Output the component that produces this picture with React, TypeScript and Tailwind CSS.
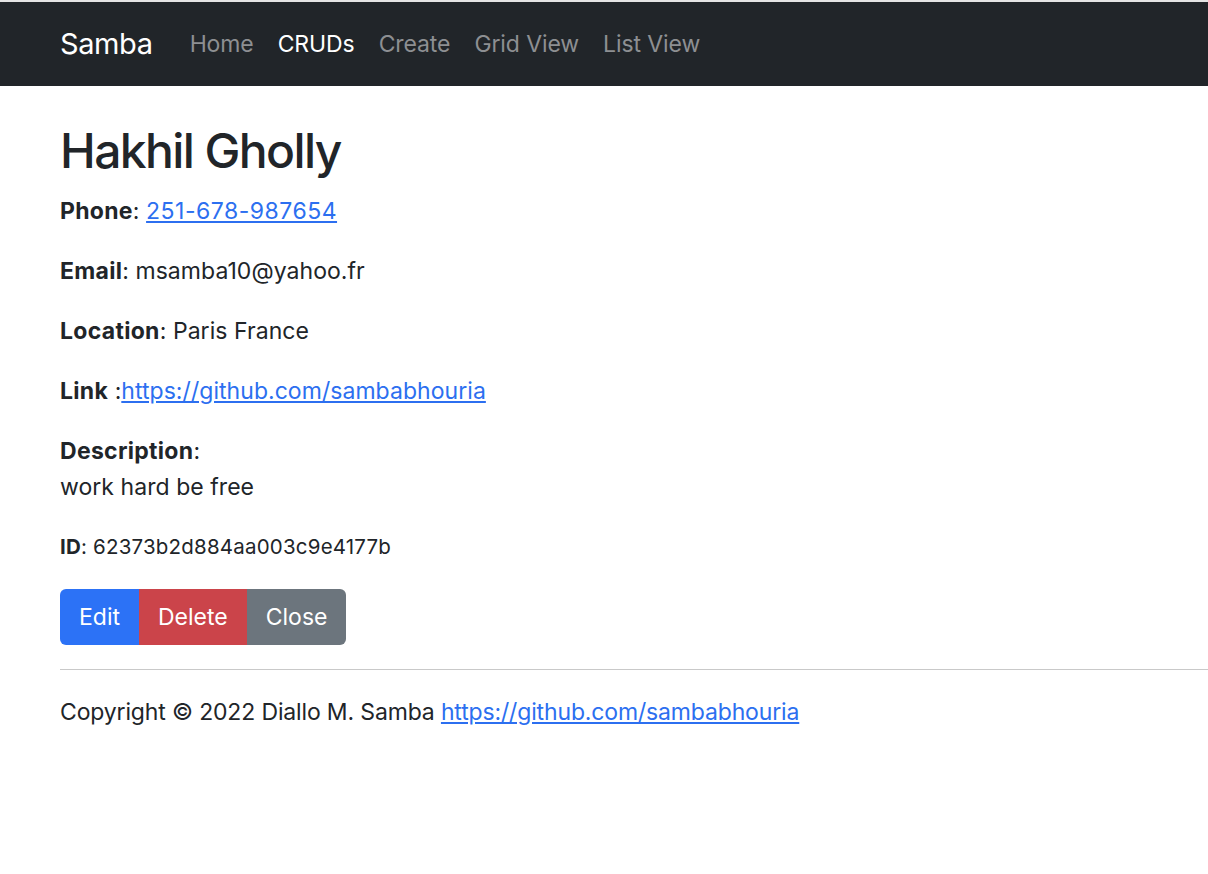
import React from 'react';

const navLinks = [
  { label: 'Home', active: false },
  { label: 'CRUDs', active: true },
  { label: 'Create', active: false },
  { label: 'Grid View', active: false },
  { label: 'List View', active: false },
];

export default function App() {
  return (
    <div className="min-h-screen bg-white font-['Inter',sans-serif] text-[23px] leading-[36px] text-[#212529]">
      <div className="h-[2px] bg-[#e4e4e4]" />
      <nav className="bg-[#212529] h-[84px] flex items-center px-[60px]">
        <a href="#" className="text-[29px] text-white mr-[25px] tracking-[-0.4px]">
          Samba
        </a>
        <div className="flex">
          {navLinks.map((l) => (
            <a
              key={l.label}
              href="#"
              className={`px-[12px] tracking-[-0.1px] ${l.active ? 'text-white' : 'text-[#8d8f92]'}`}
            >
              {l.label}
            </a>
          ))}
        </div>
      </nav>

      <main className="pl-[60px] pt-[35px]">
        <h1 className="text-[48px] leading-[60px] font-medium mb-[12px] tracking-[-1.6px]">Hakhil Gholly</h1>

        <div className="tracking-[0.05px]">
          <p className="mb-[24px]">
            <strong className="font-bold tracking-[0.3px]">Phone</strong>:{' '}
            <a href="#" className="text-[#2c6ff0] underline tracking-[0.5px]">
              251-678-987654
            </a>
          </p>
          <p className="mb-[24px]">
            <strong className="font-bold tracking-[0.3px]">Email</strong>: msamba10@yahoo.fr
          </p>
          <p className="mb-[24px]">
            <strong className="font-bold tracking-[0.3px]">Location</strong>: Paris France
          </p>
          <p className="mb-[24px]">
            <strong className="font-bold tracking-[0.3px]">Link</strong> :
            <a href="#" className="text-[#2c6ff0] underline">
              https://github.com/sambabhouria
            </a>
          </p>
          <p className="mb-[24px]">
            <strong className="font-bold tracking-[0.3px]">Description</strong>:
            <br />
            work hard be free
          </p>
          <p className="mb-[24px] text-[20.5px] tracking-[0.2px]">
            <strong className="font-bold">ID</strong>: 62373b2d884aa003c9e4177b
          </p>
        </div>

        <div className="flex">
          <button className="h-[56px] px-[19px] bg-[#2c72f6] text-white rounded-l-[6px]">Edit</button>
          <button className="h-[56px] px-[19px] bg-[#cb444a] text-white">Delete</button>
          <button className="h-[56px] px-[19px] bg-[#6c757d] text-white rounded-r-[6px]">Close</button>
        </div>

        <hr className="my-[24px] border-0 border-t border-[#c9c9c9]" />

        <footer className="tracking-[-0.15px]">
          Copyright © 2022 Diallo M. Samba{' '}
          <a href="#" className="text-[#2c6ff0] underline">
            https://github.com/sambabhouria
          </a>
        </footer>
      </main>
    </div>
  );
}
